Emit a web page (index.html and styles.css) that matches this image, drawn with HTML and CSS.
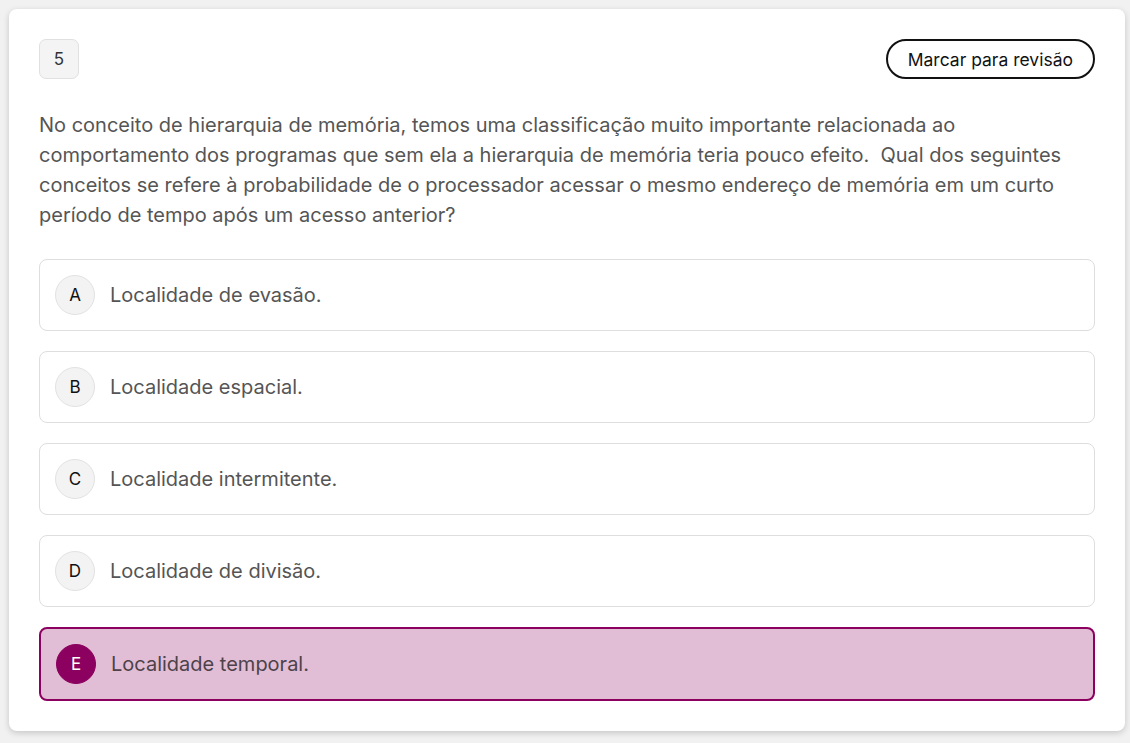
FILE: index.html
```html
<!DOCTYPE html>
<html lang="pt-BR">
<head>
    <meta charset="UTF-8">
    <meta name="viewport" content="width=device-width, initial-scale=1.0">
    <title>Questão 5</title>
    <link rel="stylesheet" href="styles.css">
</head>
<body>

    <!-- Question card -->
    <section class="question-card">
        <div class="question-header">
            <span class="question-number">5</span>
            <button class="review-btn">Marcar para revisão</button>
        </div>

        <p class="question-text">No conceito de hierarquia de memória, temos uma classificação muito importante relacionada ao comportamento dos programas que sem ela a hierarquia de memória teria pouco efeito.&nbsp; Qual dos seguintes conceitos se refere à probabilidade de o processador acessar o mesmo endereço de memória em um curto período de tempo após um acesso anterior?</p>

        <div class="options">
            <label class="option">
                <span class="option-letter">A</span>
                <span class="option-text">Localidade de evasão.</span>
            </label>
            <label class="option">
                <span class="option-letter">B</span>
                <span class="option-text">Localidade espacial.</span>
            </label>
            <label class="option">
                <span class="option-letter">C</span>
                <span class="option-text">Localidade intermitente.</span>
            </label>
            <label class="option">
                <span class="option-letter">D</span>
                <span class="option-text">Localidade de divisão.</span>
            </label>
            <label class="option selected">
                <span class="option-letter">E</span>
                <span class="option-text">Localidade temporal.</span>
            </label>
        </div>
    </section>

</body>
</html>
```

FILE: styles.css
```css
body {
    font-family: Inter, "Noto Sans", Arial, sans-serif;
    margin: 0;
    padding: 9px;
    background-color: #f1f1f1;
    color: #555;
}

.question-card {
    width: 1116px;
    box-sizing: border-box;
    padding: 30px;
    background-color: #fff;
    border-radius: 8px;
    box-shadow: 0 2px 6px rgba(0, 0, 0, 0.18);
}

.question-header {
    display: flex;
    justify-content: space-between;
    align-items: center;
}

.question-number {
    width: 40px;
    height: 40px;
    box-sizing: border-box;
    display: flex;
    justify-content: center;
    align-items: center;
    background-color: #f4f4f4;
    border: 1px solid #e0e0e0;
    border-radius: 7px;
    font-size: 17px;
    color: #333;
}

.review-btn {
    height: 40px;
    padding: 0 20px;
    background-color: #fff;
    border: 2px solid #111;
    border-radius: 20px;
    font-family: inherit;
    font-size: 17.5px;
    color: #111;
    cursor: pointer;
}

.question-text {
    margin: 31px 0 29px;
    font-size: 20px;
    line-height: 30px;
    color: #555;
}

.options {
    display: flex;
    flex-direction: column;
    gap: 20px;
}

.option {
    display: flex;
    align-items: center;
    gap: 15px;
    padding: 15px;
    border: 1px solid #dedede;
    border-radius: 8px;
    cursor: pointer;
}

.option-letter {
    width: 40px;
    height: 40px;
    box-sizing: border-box;
    display: flex;
    justify-content: center;
    align-items: center;
    flex-shrink: 0;
    background-color: #f3f3f3;
    border: 1px solid #e2e2e2;
    border-radius: 50%;
    font-size: 17px;
    color: #111;
}

.option-text {
    font-size: 20px;
    color: #555;
}

.option.selected {
    background-color: #e1bed6;
    border: 2px solid #8c005f;
}

.option.selected .option-letter {
    background-color: #8c005f;
    border-color: #8c005f;
    color: #fff;
}

.option.selected .option-text {
    color: #4d4249;
}
```
